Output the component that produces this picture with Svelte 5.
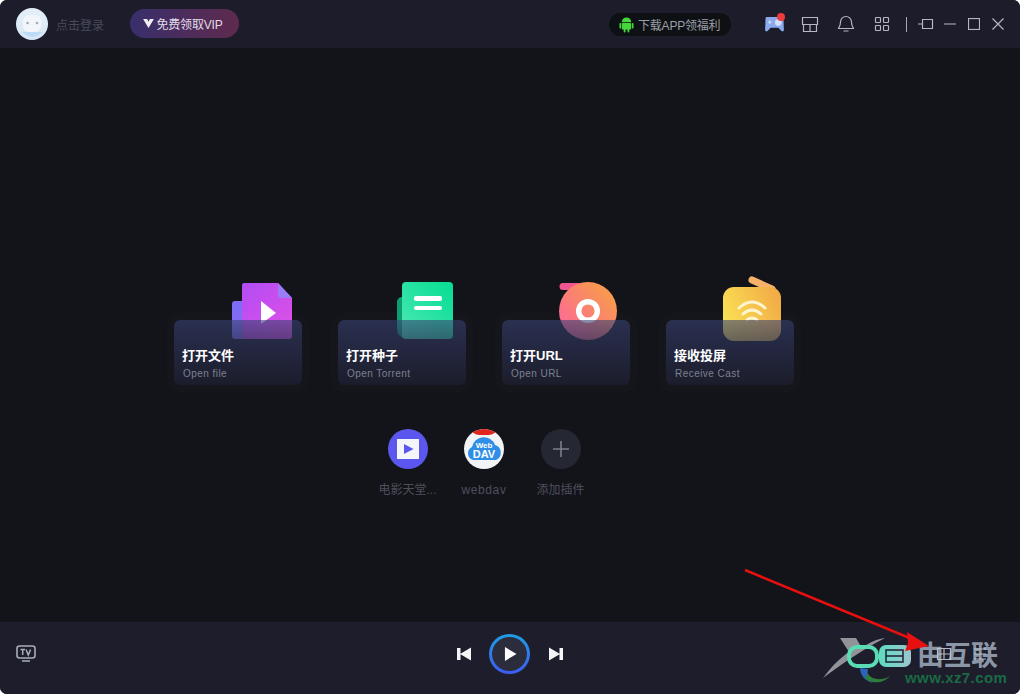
<script>
    const tiles = [
        { key: "file", title: "打开文件", sub: "Open file" },
        { key: "torrent", title: "打开种子", sub: "Open Torrent" },
        { key: "url", title: "打开URL", sub: "Open URL" },
        { key: "cast", title: "接收投屏", sub: "Receive Cast" },
    ];
</script>

<div class="window">
    <header class="topbar">
        <div class="avatar">
            <svg viewBox="0 0 32 32" width="32" height="32">
                <defs>
                    <linearGradient id="ava" x1="0" y1="0" x2="0" y2="1">
                        <stop offset="0" stop-color="#e4eef8" />
                        <stop offset="1" stop-color="#d6e7f7" />
                    </linearGradient>
                </defs>
                <circle cx="16" cy="16" r="16" fill="url(#ava)" />
                <rect x="7" y="7" width="18" height="17" rx="6" fill="#f2f6fb" />
                <path d="M6 24h20a13 13 0 0 1-20 0z" fill="#bcdcf5" />
                <circle cx="11.500" cy="15" r="1.300" fill="#a0abb8" />
                <circle cx="21" cy="15" r="1.300" fill="#a0abb8" />
            </svg>
        </div>
        <span class="login">点击登录</span>
        <div class="vip">
            <svg viewBox="0 0 12 10" width="11" height="9"><path d="M0 0h4.500L6 3l1.500-3H12L6 10z" fill="#f1eef6" /></svg>
            <span>免费领取VIP</span>
        </div>

        <div class="download">
            <svg viewBox="0 0 16 18" width="15" height="17">
                <g fill="#45d63c">
                    <path d="M3 6.500a5 5 0 0 1 10 0z" />
                    <rect x="3" y="7.300" width="10" height="7" rx="1" />
                    <rect x="0.500" y="7.300" width="1.800" height="6" rx=".9" />
                    <rect x="13.700" y="7.300" width="1.800" height="6" rx=".9" />
                    <rect x="5" y="13" width="2" height="4.500" rx="1" />
                    <rect x="9" y="13" width="2" height="4.500" rx="1" />
                </g>
            </svg>
            <span>下载APP领福利</span>
        </div>

        <div class="tools">
            <div class="tool game">
                <svg viewBox="0 0 20 17" width="19" height="16">
                    <path d="M2 1h16a1.500 1.500 0 0 1 1.500 1.500l.5 12.500a1.500 1.500 0 0 1-2.500 1L14 12.500H6L2.500 16A1.500 1.500 0 0 1 0 15L.5 2.500A1.500 1.500 0 0 1 2 1z" fill="#8aa9ee" />
                    <path d="M5 4.500v4M3 6.500h4" stroke="#dbe5fb" stroke-width="1" />
                    <circle cx="14" cy="7" r="3.500" fill="#d5e0f9" />
                </svg>
                <i class="dot"></i>
            </div>
            <div class="tool">
                <svg viewBox="0 0 18 18" width="18" height="18" class="line">
                    <path d="M1.500 2.500h15v7h-15zM2.500 9.500v7h13v-7M9 9.500v7" />
                </svg>
            </div>
            <div class="tool">
                <svg viewBox="0 0 18 18" width="18" height="18" class="line">
                    <path d="M9 1.500a5.500 5.500 0 0 0-5.500 5.500c0 4-2 6-2 6.500h15c0-.5-2-2.500-2-6.500A5.500 5.500 0 0 0 9 1.500zM6.500 16h5" />
                </svg>
            </div>
            <div class="tool">
                <svg viewBox="0 0 16 16" width="16" height="16" class="line">
                    <rect x="1.500" y="1.500" width="5" height="5" rx=".8" />
                    <rect x="9.500" y="1.500" width="5" height="5" rx=".8" />
                    <rect x="1.500" y="9.500" width="5" height="5" rx=".8" />
                    <rect x="9.500" y="9.500" width="5" height="5" rx=".8" />
                </svg>
            </div>
            <i class="sep"></i>
            <div class="win">
                <svg viewBox="0 0 16 12" width="16" height="12" class="line">
                    <path d="M4.500 1.500h10v9h-10zM0 6h4.500" />
                </svg>
            </div>
            <div class="win">
                <svg viewBox="0 0 12 12" width="12" height="12" class="line"><path d="M0 6h12" /></svg>
            </div>
            <div class="win">
                <svg viewBox="0 0 12 12" width="12" height="12" class="line"><rect x=".5" y=".5" width="11" height="11" /></svg>
            </div>
            <div class="win">
                <svg viewBox="0 0 12 12" width="12" height="12" class="line"><path d="M.5.500l11 11M11.500.500l-11 11" /></svg>
            </div>
        </div>
    </header>

    <main class="content">
        <div class="stage">
            <div class="tiles">
                {#each tiles as tile}
                    <div class="tile">
                        <svg class="art" viewBox="0 0 70 68" width="70" height="68">
                            {#if tile.key === "file"}
                                <defs>
                                    <linearGradient id="fileg" x1="0" y1="0" x2="1" y2="1">
                                        <stop offset="0" stop-color="#b14df5" />
                                        <stop offset="1" stop-color="#e24fe4" />
                                    </linearGradient>
                                </defs>
                                <rect x="8" y="26" width="24" height="38" rx="3" fill="#7d6cf4" />
                                <path d="M20 8h34l14 15v38a3 3 0 0 1-3 3H21a3 3 0 0 1-3-3V10a2 2 0 0 1 2-2z" fill="url(#fileg)" />
                                <path d="M54 8l14 15H57a3 3 0 0 1-3-3z" fill="#9a7cf6" />
                                <path d="M37 26l15 12-15 11z" fill="#fff" />
                            {:else if tile.key === "torrent"}
                                <defs>
                                    <linearGradient id="torg" x1="0" y1="1" x2="1" y2="0">
                                        <stop offset="0" stop-color="#4ce8b4" />
                                        <stop offset="1" stop-color="#05dd92" />
                                    </linearGradient>
                                </defs>
                                <path d="M14 22h10v42H19a10 10 0 0 1-10-10V27a5 5 0 0 1 5-5z" fill="#0c9d72" />
                                <rect x="14" y="7" width="51" height="57" rx="4" fill="url(#torg)" />
                                <rect x="26" y="21" width="28" height="5" rx="2" fill="#fff" />
                                <rect x="26" y="31" width="28" height="4" rx="2" fill="#fff" />
                            {:else if tile.key === "url"}
                                <defs>
                                    <linearGradient id="urlg" x1="0" y1="1" x2="1" y2="0">
                                        <stop offset="0" stop-color="#fd5fa3" />
                                        <stop offset="1" stop-color="#f7a53d" />
                                    </linearGradient>
                                </defs>
                                <path d="M11 8h22v7H11a3.500 3.500 0 0 1 0-7z" fill="#f2568f" />
                                <circle cx="36" cy="36" r="29" fill="url(#urlg)" />
                                <circle cx="36" cy="36" r="9.300" fill="none" stroke="#fff" stroke-width="5.500" />
                            {:else}
                                <defs>
                                    <linearGradient id="castg" x1="0" y1=".7" x2="1" y2=".3">
                                        <stop offset="0" stop-color="#fbe254" />
                                        <stop offset="1" stop-color="#f2ac47" />
                                    </linearGradient>
                                </defs>
                                <path d="M36 5l20 9" stroke="#f6b269" stroke-width="7" stroke-linecap="round" />
                                <rect x="7" y="12" width="58" height="54" rx="11" fill="url(#castg)" />
                                <g fill="none" stroke="#fff6d0" stroke-width="3" stroke-linecap="round">
                                    <path d="M23 33q13-12 26 0" />
                                    <path d="M27 39q9-8 18 0" />
                                    <path d="M31 45q5-4 10 0" />
                                </g>
                            {/if}
                        </svg>
                        <div class="card">
                            <div class="card-title">{tile.title}</div>
                            <div class="card-sub">{tile.sub}</div>
                        </div>
                    </div>
                {/each}
            </div>

            <div class="plugins">
                <div class="plugin">
                    <svg viewBox="0 0 40 40" width="40" height="40">
                        <circle cx="20" cy="20" r="20" fill="#5b57ee" />
                        <rect x="9" y="10" width="22" height="20" fill="#f4f4fb" />
                        <path d="M16 15l9.500 5-9.500 5z" fill="#5b57ee" />
                    </svg>
                    <span>电影天堂...</span>
                </div>
                <div class="plugin">
                    <div class="dav">
                        <i class="ribbon"></i>
                        <svg viewBox="0 0 40 40" width="40" height="40">
                            <path d="M9 31a7 7 0 0 1-1-13 12 12 0 0 1 23-2 8 8 0 0 1 1 15z" fill="#2f8fe8" />
                        </svg>
                        <b class="web">Web</b>
                        <b class="davtext">DAV</b>
                    </div>
                    <span class="latin">webdav</span>
                </div>
                <div class="plugin">
                    <div class="add">
                        <svg viewBox="0 0 16 16" width="16" height="16">
                            <path d="M8 0v16M0 8h16" stroke="#7c808c" stroke-width="1.600" />
                        </svg>
                    </div>
                    <span>添加插件</span>
                </div>
            </div>
        </div>
    </main>

    <footer class="player">
        <svg class="tv" viewBox="0 0 20 20" width="20" height="20">
            <rect x="1" y="2" width="18" height="12" rx="2.500" fill="none" stroke="#a9adba" stroke-width="1.600" />
            <path d="M4.500 5.500h4.500M6.700 5.500v5.500M10 5.500l2.300 5.500 2.300-5.500" fill="none" stroke="#a9adba" stroke-width="1.500" />
            <path d="M6 17h8" stroke="#a9adba" stroke-width="1.600" />
        </svg>

        <div class="controls">
            <svg viewBox="0 0 16 16" width="16" height="16">
                <path d="M1 2h3.500v12H1zM15 1.500v13L4 8z" fill="#f5f5f7" />
            </svg>
            <div class="play">
                <svg viewBox="0 0 14 16" width="13" height="16"><path d="M1 .500l12.500 7.500L1 15.500z" fill="#fff" /></svg>
            </div>
            <svg viewBox="0 0 16 16" width="16" height="16">
                <path d="M15 2h-3.500v12H15zM1 1.500v13L12 8z" fill="#f5f5f7" />
            </svg>
        </div>

        <div class="right-icons">
            <svg viewBox="0 0 16 16" width="16" height="16" class="line">
                <path d="M1.500 2.500h13v11h-13zM1.500 8h13M8 2.500v11" />
            </svg>
            <svg viewBox="0 0 16 16" width="16" height="16" class="line">
                <path d="M2 3h12M2 8h12M2 13h12" />
            </svg>
        </div>
    </footer>

    <!-- 水印和红色箭头，压在最上层 -->
    <div class="mark">
        <svg viewBox="0 0 90 50" width="90" height="50">
            <defs>
                <linearGradient id="markg" x1="0" y1="0" x2="1" y2="0">
                    <stop offset="0" stop-color="#5edcc0" />
                    <stop offset="1" stop-color="#9cc6cf" />
                </linearGradient>
            </defs>
            <path d="M18 2H34L40 12C48 6 55 3 63 2 40 14 20 28 1 42 10 30 18 22 27 16z" fill="#a6a8ad" opacity=".85" />
            <path d="M38 32c0 7 5 13 13 15-4-3-6-8-5-14z" fill="#2c64b8" />
            <path d="M46 38c4 6 14 7 22 2-6 7-18 9-25 2z" fill="#2f7e3a" />
            <rect x="27" y="11" width="28" height="19" rx="8" fill="none" stroke="#57dcb4" stroke-width="4" />
            <rect x="57" y="9" width="32" height="22" rx="7" fill="url(#markg)" />
            <path d="M36 20h12M64 14v12h17v-12zM64 20h17" stroke="#1c2030" stroke-width="1.500" fill="none" />
        </svg>
        <span class="mark-name">由互联</span>
        <span class="mark-url">www.xz7.com</span>
    </div>
    <svg class="arrow" viewBox="0 0 1020 694" width="1020" height="694">
        <path d="M745 570L912 639" stroke="#e6100f" stroke-width="2.500" />
        <path d="M929 646l-22-14 1 11-3 8z" fill="#e6100f" />
    </svg>
</div>

<style>
    :global(body) {
        margin: 0;
        background: #fff;
    }

    .window {
        position: relative;
        width: 1020px;
        height: 694px;
        display: flex;
        flex-direction: column;
        border-radius: 7px;
        overflow: hidden;
        background: #13131a;
        font-family: "Liberation Sans", "Noto Sans CJK SC", sans-serif;
    }

    .line {
        fill: none;
        stroke: #b4b7c2;
        stroke-width: 1.200;
    }

    .topbar {
        height: 48px;
        flex: none;
        display: flex;
        align-items: center;
        padding-left: 16px;
        background: #1c1c2a;
    }

    .avatar {
        width: 32px;
        height: 32px;
        margin-right: 8px;
    }

    .login {
        font-size: 12px;
        color: #474b5a;
        width: 74px;
    }

    .vip {
        width: 109px;
        height: 29px;
        margin-top: -1px;
        padding-right: 4px;
        box-sizing: border-box;
        display: flex;
        align-items: center;
        justify-content: center;
        gap: 3px;
        border-radius: 15px;
        background: linear-gradient(90deg, #382f6c, #5f2a4d);
        color: #e2dbe8;
        font-size: 12px;
        letter-spacing: -0.2px;
    }

    .download {
        margin-left: 370px;
        width: 122px;
        height: 23px;
        box-sizing: border-box;
        padding-left: 10px;
        display: flex;
        align-items: center;
        gap: 4px;
        border-radius: 12px;
        background: #0e1113;
        color: #9b9ea8;
        font-size: 12px;
        letter-spacing: -0.2px;
    }

    .tools {
        margin-left: 25px;
        display: flex;
        align-items: center;
    }

    .tool {
        width: 36px;
        display: flex;
        justify-content: center;
    }

    .game {
        position: relative;
    }

    .dot {
        position: absolute;
        top: -3px;
        right: 7px;
        width: 8px;
        height: 8px;
        border-radius: 50%;
        background: #ee3b3b;
    }

    .sep {
        width: 1px;
        height: 15px;
        margin: 0 7px 0 6px;
        background: #a8abb6;
    }

    .win {
        width: 24px;
        display: flex;
        justify-content: center;
    }

    .content {
        flex: 1;
        padding-left: 174px;
    }

    .stage {
        width: 620px;
        padding-top: 227px;
    }

    .tiles {
        display: flex;
        gap: 36px;
    }

    .tile {
        width: 128px;
        display: flex;
        flex-direction: column;
        align-items: flex-end;
    }

    .art {
        margin-right: 8px;
        margin-bottom: -23px;
    }

    .card {
        position: relative;
        width: 100%;
        height: 65px;
        box-sizing: border-box;
        padding: 27px 8px 0;
        border-radius: 6px;
        background: linear-gradient(180deg, rgba(57, 67, 116, 0.6), rgba(28, 29, 44, 0.96));
        box-shadow: 0 0 0 7px rgba(255, 255, 255, 0.012);
    }

    .card-title {
        font-size: 13px;
        line-height: 17px;
        font-weight: 700;
        color: #fff;
    }

    .card-sub {
        margin-top: 3px;
        padding-left: 1px;
        font-size: 10px;
        line-height: 13px;
        letter-spacing: 0.45px;
        color: #7d8190;
    }

    .plugins {
        margin-top: 44px;
        display: flex;
        justify-content: center;
    }

    .plugin {
        width: 76.500px;
        display: flex;
        flex-direction: column;
        align-items: center;
        gap: 13px;
    }

    .plugin span {
        font-size: 12px;
        line-height: 17px;
        color: #4d505c;
        white-space: nowrap;
    }

    .plugin .latin {
        letter-spacing: 0.6px;
    }

    .dav {
        position: relative;
        width: 40px;
        height: 40px;
        border-radius: 50%;
        overflow: hidden;
        background: #f2f3f4;
    }

    .ribbon {
        position: absolute;
        top: -3px;
        left: 6px;
        width: 28px;
        height: 9px;
        border-radius: 0 0 14px 14px;
        background: #e0261d;
    }

    .web,
    .davtext {
        position: absolute;
        left: 0;
        right: 0;
        text-align: center;
        color: #fff;
    }

    .web {
        top: 12px;
        font-size: 8px;
        line-height: 9px;
    }

    .davtext {
        top: 19px;
        font-size: 11px;
        line-height: 12px;
    }

    .add {
        width: 40px;
        height: 40px;
        border-radius: 50%;
        display: flex;
        align-items: center;
        justify-content: center;
        background: #252733;
    }

    .player {
        height: 72px;
        flex: none;
        display: flex;
        align-items: center;
        padding: 0 32px 8px 16px;
        box-sizing: border-box;
        background: #1d1d2b;
    }

    .tv {
        flex: none;
    }

    .controls {
        margin-left: 420px;
        display: flex;
        align-items: center;
        gap: 18px;
    }

    .play {
        width: 33px;
        height: 34px;
        margin-left: -1px;
        padding-left: 2px;
        border: 3px solid transparent;
        border-radius: 50%;
        display: flex;
        align-items: center;
        justify-content: center;
        box-sizing: content-box;
        background:
            linear-gradient(#2b2d3d, #2b2d3d) padding-box,
            linear-gradient(180deg, #1f9ee6, #3d5bf0) border-box;
    }

    .right-icons {
        margin-left: auto;
        display: flex;
        gap: 20px;
    }

    .mark {
        position: absolute;
        left: 822px;
        top: 636px;
        width: 190px;
        height: 50px;
    }

    .mark-name {
        position: absolute;
        left: 95px;
        top: 6px;
        font-size: 27px;
        line-height: 28px;
        font-weight: 700;
        color: rgba(190, 205, 222, 0.7);
        white-space: nowrap;
    }

    .mark-url {
        position: absolute;
        left: 83px;
        top: 34px;
        font-size: 15px;
        line-height: 16px;
        font-weight: 700;
        letter-spacing: 0.4px;
        color: #1a6a45;
    }

    .arrow {
        position: absolute;
        left: 0;
        top: 0;
        pointer-events: none;
    }
</style>
